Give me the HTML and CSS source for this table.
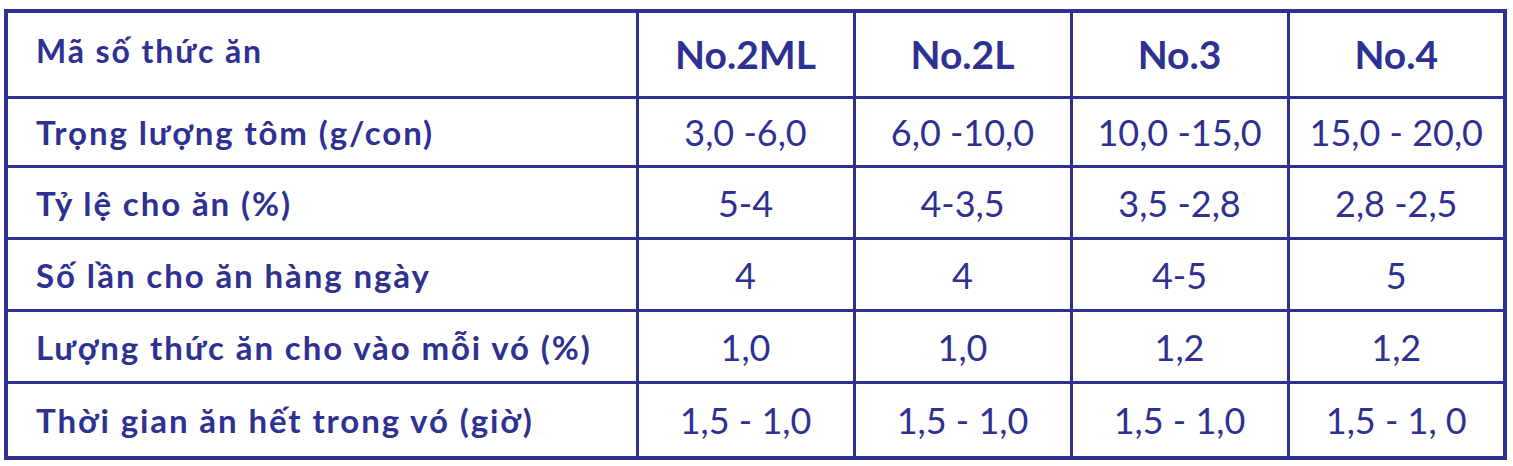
FILE: index.html
```html
<!DOCTYPE html>
<html lang="vi">
<head>
	<meta charset="UTF-8">
	<title>Bảng cho ăn</title>
	<link rel="stylesheet" href="styles.css">
</head>
<body>
	<table class="feedTable">
		<colgroup>
			<col class="colLabel">
			<col class="colValue">
			<col class="colValue">
			<col class="colValue">
			<col class="colValue">
		</colgroup>
		<tr class="headRow">
			<th class="label">Mã số thức ăn</th>
			<th>No.2ML</th>
			<th>No.2L</th>
			<th>No.3</th>
			<th>No.4</th>
		</tr>
		<tr class="firstRow">
			<td class="label">Trọng lượng tôm (g/con)</td>
			<td>3,0 -6,0</td>
			<td>6,0 -10,0</td>
			<td>10,0 -15,0</td>
			<td>15,0 - 20,0</td>
		</tr>
		<tr>
			<td class="label">Tỷ lệ cho ăn (%)</td>
			<td>5-4</td>
			<td>4-3,5</td>
			<td>3,5 -2,8</td>
			<td>2,8 -2,5</td>
		</tr>
		<tr>
			<td class="label">Số lần cho ăn hàng ngày</td>
			<td>4</td>
			<td>4</td>
			<td>4-5</td>
			<td>5</td>
		</tr>
		<tr>
			<td class="label">Lượng thức ăn cho vào mỗi vó (%)</td>
			<td>1,0</td>
			<td>1,0</td>
			<td>1,2</td>
			<td>1,2</td>
		</tr>
		<tr class="lastRow">
			<td class="label">Thời gian ăn hết trong vó (giờ)</td>
			<td>1,5 - 1,0</td>
			<td>1,5 - 1,0</td>
			<td>1,5 - 1,0</td>
			<td>1,5 - 1, 0</td>
		</tr>
	</table>
</body>
</html>
```

FILE: styles.css
```css
html, body {
	margin: 0;
	padding: 0;
	background: #fff;
}
body {
	padding: 9px 0 0 4px;
}
.feedTable {
	border-collapse: collapse;
	table-layout: fixed;
	width: 1499px;
	border: 4px solid #2e3192;
	font-family: Lato, "Noto Sans", sans-serif;
	color: #2e3192;
}
.colLabel {
	width: 631px;
}
.colValue {
	width: 217px;
}
.feedTable th,
.feedTable td {
	border: 3px solid #2e3192;
	padding: 0;
	text-align: center;
	vertical-align: middle;
	height: 69px;
	font-size: 36px;
	font-weight: 400;
}
.feedTable th {
	height: 75px;
	font-size: 39px;
	font-weight: 700;
	padding-bottom: 2px;
}
.feedTable .label {
	text-align: left;
	padding-left: 28px;
	font-size: 33px;
	font-weight: 700;
	letter-spacing: 1.9px;
}
.headRow .label {
	padding-bottom: 8px;
	font-size: 32px;
}
.firstRow td {
	height: 66px;
}
.lastRow td {
	height: 72px;
}
```
